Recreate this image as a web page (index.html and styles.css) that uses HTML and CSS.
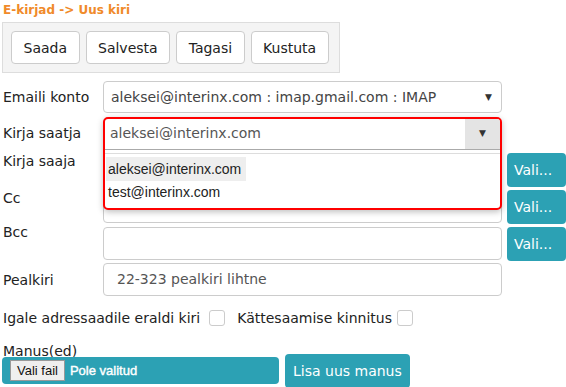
FILE: index.html
```html
<!DOCTYPE html>
<html>
<head>
    <title>Uus kiri</title>
    <link rel="stylesheet" href="styles.css">
</head>
<body>
    <div class="page">
        <div class="crumb">E-kirjad -&gt; Uus kiri</div>

        <div class="toolbar">
            <button class="tool-btn">Saada</button>
            <button class="tool-btn">Salvesta</button>
            <button class="tool-btn">Tagasi</button>
            <button class="tool-btn">Kustuta</button>
        </div>

        <form class="mail-form">
            <div class="row row-account">
                <label class="row-label">Emaili konto</label>
                <div class="field">
                    <div class="select">
                        <span>aleksei@interinx.com : imap.gmail.com : IMAP</span>
                        <span class="caret">&#9660;</span>
                    </div>
                </div>
            </div>

            <div class="row row-sender">
                <label class="row-label">Kirja saatja</label>
                <div class="field sender-field">
                    <div class="open-box">
                        <div class="open-selection">
                            <span class="open-value">aleksei@interinx.com</span>
                            <span class="open-arrow">&#9660;</span>
                        </div>
                        <ul class="open-list">
                            <li class="active">aleksei@interinx.com</li>
                            <li>test@interinx.com</li>
                        </ul>
                    </div>
                </div>
            </div>

            <div class="row row-to">
                <label class="row-label top">Kirja saaja</label>
                <div class="field"><div class="input tall"></div></div>
                <button type="button" class="pick-btn">Vali...</button>
            </div>

            <div class="row row-cc">
                <label class="row-label top">Cc</label>
                <div class="field"><div class="input tall"></div></div>
                <button type="button" class="pick-btn">Vali...</button>
            </div>

            <div class="row row-bcc">
                <label class="row-label top">Bcc</label>
                <div class="field"><div class="input tall"></div></div>
                <button type="button" class="pick-btn">Vali...</button>
            </div>

            <div class="row row-subject">
                <label class="row-label">Pealkiri</label>
                <div class="field"><div class="input subject">22-323 pealkiri lihtne</div></div>
            </div>

            <div class="checks">
                <span>Igale adressaadile eraldi kiri</span>
                <span class="checkbox first"></span>
                <span>Kättesaamise kinnitus</span>
                <span class="checkbox second"></span>
            </div>

            <div class="attach-label">Manus(ed)</div>
            <div class="attach-row">
                <div class="file-box">
                    <span class="file-btn">Vali fail</span>
                    <span class="file-text">Pole valitud</span>
                </div>
                <button type="button" class="add-btn">Lisa uus manus</button>
            </div>
        </form>
    </div>
</body>
</html>
```

FILE: styles.css
```css
* {
    margin: 0;
    padding: 0;
    box-sizing: border-box;
}

body {
    background: #fff;
    color: #222;
    font-family: 'DejaVu Sans', Verdana, sans-serif;
    font-size: 14px;
}

.page {
    padding: 3px 0 0 2px;
    overflow: hidden;
}

.crumb {
    color: #f08a2a;
    font-weight: bold;
    font-size: 12px;
    line-height: 15px;
    padding-left: 1px;
    margin-bottom: 4px;
}

.toolbar {
    display: flex;
    gap: 6px;
    width: 338px;
    height: 51px;
    padding: 8px 0 0 8px;
    background: #f4f4f4;
    border: 1px solid #ddd;
}

.tool-btn {
    height: 33px;
    padding: 0 11.5px;
    font-family: 'DejaVu Sans', Verdana, sans-serif;
    font-size: 14px;
    color: #222;
    background: #fff;
    border: 1px solid #ccc;
    border-radius: 4px;
}

.mail-form {
    margin-top: 8px;
    padding-left: 1px;
}

.row {
    display: flex;
    align-items: center;
}

.row-label {
    width: 100px;
    flex-shrink: 0;
    font-size: 14px;
    color: #222;
}

.row-label.top {
    align-self: flex-start;
}

.field {
    width: 399px;
    flex-shrink: 0;
}

.select {
    display: flex;
    justify-content: space-between;
    align-items: center;
    height: 32px;
    padding: 0 9px 0 7px;
    border: 1px solid #ccc;
    border-radius: 4px;
    color: #444;
}

.caret {
    font-size: 9px;
    color: #333;
}

.row-account {
    margin-bottom: 4px;
}

.row-sender {
    height: 32px;
    margin-bottom: 4px;
    position: relative;
    z-index: 2;
}

.sender-field {
    position: relative;
    height: 32px;
}

.open-box {
    position: absolute;
    top: 0;
    left: 0;
    right: 0;
    background: #fff;
    border: 2px solid #f00;
    border-radius: 5px;
    box-shadow: 0 2px 6px rgba(0, 0, 0, 0.25);
    overflow: hidden;
}

.open-selection {
    display: flex;
    height: 31px;
    border-bottom: 1px solid #aaa;
}

.open-value {
    flex: 1;
    padding-left: 5px;
    line-height: 29px;
    color: #555;
}

.open-arrow {
    width: 35px;
    background: #e4e4e4;
    text-align: center;
    line-height: 29px;
    font-size: 9px;
    color: #333;
}

.open-list {
    list-style: none;
    border-top: 1px solid #ddd;
    margin-top: 3px;
    padding: 3px 0 4px 1px;
    font-family: 'Liberation Sans', Arial, sans-serif;
    font-size: 14px;
    line-height: 17px;
    color: #222;
}

.open-list li {
    display: table;
    padding: 3px 5px 3px 2px;
}

.open-list li.active {
    padding: 4px 5px 3px 2px;
    background: #eee;
}

.input {
    border: 1px solid #ccc;
    border-radius: 4px;
    background: #fff;
}

.input.tall {
    height: 34px;
}

.input.subject {
    height: 33px;
    line-height: 31px;
    padding-left: 13px;
    color: #555;
}

.pick-btn {
    margin-left: 5px;
    height: 34px;
    width: 60px;
    padding: 0 0 0 7px;
    text-align: left;
    font-family: 'DejaVu Sans', Verdana, sans-serif;
    font-size: 14px;
    color: #fff;
    background: #2ca1b4;
    border: none;
    border-radius: 4px;
    align-self: flex-start;
}

.row-to {
    margin-bottom: 1px;
}

.row-cc .row-label {
    padding-top: 2px;
}

.row-cc .pick-btn {
    margin-top: 2px;
}

.row-cc {
    margin-bottom: 2px;
}

.row-bcc .row-label {
    margin-top: -2px;
}

.row-bcc .input.tall {
    height: 33px;
}

.row-bcc .pick-btn {
    margin-top: 1px;
}

.row-bcc {
    margin-bottom: 2px;
}

.row-subject {
    margin-bottom: 13px;
}

.checks {
    display: flex;
    align-items: center;
    height: 17px;
}

.checkbox {
    width: 16px;
    height: 16px;
    border: 1px solid #ccc;
    border-radius: 3px;
}

.checkbox.first {
    margin: 0 12px 0 9px;
}

.checkbox.second {
    margin-left: 5px;
}

.attach-label {
    margin-top: 17px;
    line-height: 17px;
}

.attach-row {
    display: flex;
    align-items: flex-start;
    gap: 6px;
    margin: -6px 0 0 -1px;
}

.file-box {
    display: flex;
    align-items: center;
    gap: 5px;
    width: 277px;
    height: 27px;
    margin-top: 3px;
    padding-left: 8px;
    background: #2ca1b4;
    border-radius: 4px;
}

.file-btn {
    font-family: 'Liberation Sans', Arial, sans-serif;
    font-size: 13px;
    line-height: 15px;
    padding: 2px 6px;
    background: #efefef;
    border: 1px solid #999;
    color: #111;
}

.file-text {
    font-family: 'Liberation Sans', Arial, sans-serif;
    font-size: 13px;
    color: #fff;
    -webkit-text-stroke: 0.4px #fff;
}

.add-btn {
    height: 34px;
    padding: 0 8px;
    font-family: 'DejaVu Sans', Verdana, sans-serif;
    font-size: 14px;
    color: #fff;
    background: #2ca1b4;
    border: none;
    border-radius: 4px;
}
```
